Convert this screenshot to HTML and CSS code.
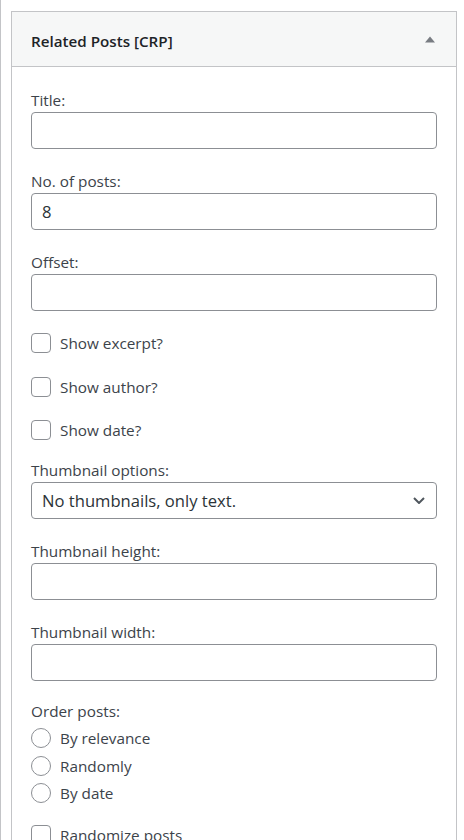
FILE: index.html
```html
<!DOCTYPE html>
<html lang="en">
<head>
<meta charset="utf-8">
<title>Related Posts [CRP]</title>
<link rel="stylesheet" href="styles.css">
</head>
<body>
<div class="page">
  <div class="widget">
    <div class="widget-top">
      <h3 class="widget-title">Related Posts [CRP]</h3>
      <span class="toggle" aria-hidden="true">
        <svg width="10" height="7" viewBox="0 0 10 7"><path d="M0 6.5 L5 0.5 L10 6.5 Z" fill="#787c82"/></svg>
      </span>
    </div>
    <div class="widget-inside">
      <div class="field">
        <label for="f-title">Title:</label>
        <input id="f-title" class="text-input" type="text">
      </div>
      <div class="field">
        <label for="f-limit">No. of posts:</label>
        <input id="f-limit" class="text-input" type="text" value="8">
      </div>
      <div class="field">
        <label for="f-offset">Offset:</label>
        <input id="f-offset" class="text-input" type="text">
      </div>
      <div class="check-group">
        <label class="check-row"><input type="checkbox" class="check"><span>Show excerpt?</span></label>
        <label class="check-row"><input type="checkbox" class="check"><span>Show author?</span></label>
        <label class="check-row"><input type="checkbox" class="check"><span>Show date?</span></label>
      </div>
      <div class="field">
        <label for="f-thumb">Thumbnail options:</label>
        <div class="select-wrap">
          <select id="f-thumb" class="select">
            <option>No thumbnails, only text.</option>
          </select>
          <svg class="chevron" width="12" height="7" viewBox="0 0 12 7"><path d="M1 1 L6 6 L11 1" fill="none" stroke="#50575e" stroke-width="2"/></svg>
        </div>
      </div>
      <div class="field">
        <label for="f-th">Thumbnail height:</label>
        <input id="f-th" class="text-input" type="text">
      </div>
      <div class="field field-tight">
        <label for="f-tw">Thumbnail width:</label>
        <input id="f-tw" class="text-input" type="text">
      </div>
      <div class="radio-group">
        <div class="group-label">Order posts:</div>
        <label class="radio-row"><input type="radio" name="order" class="radio"><span>By relevance</span></label>
        <label class="radio-row"><input type="radio" name="order" class="radio"><span>Randomly</span></label>
        <label class="radio-row"><input type="radio" name="order" class="radio"><span>By date</span></label>
      </div>
      <div class="check-group">
        <label class="check-row"><input type="checkbox" class="check"><span>Randomize posts</span></label>
      </div>
    </div>
  </div>
</div>
</body>
</html>
```
FILE: styles.css
```css
* {
  box-sizing: border-box;
}

html, body {
  margin: 0;
  background: #ffffff;
}

body {
  font-family: "Open Sans", "Noto Sans", sans-serif;
  font-size: 15.3px;
  color: #3c434a;
}

.page {
  border-left: 1px solid #c3c4c7;
  padding: 11px 7px 0 10px;
  min-height: 100vh;
}

.widget {
  width: 446px;
  border: 1px solid #c3c4c7;
  background: #ffffff;
}

.widget-top {
  height: 55px;
  background: #f6f7f7;
  border-bottom: 1px solid #c3c4c7;
  display: flex;
  justify-content: space-between;
  align-items: center;
  padding: 0 21px 0 19px;
}

.widget-title {
  margin: 0;
  padding-top: 3px;
  font-size: 15.2px;
  font-weight: 600;
  line-height: 22px;
  color: #1d2327;
}

.toggle {
  display: flex;
  align-items: center;
}

.widget-inside {
  padding: 23px 19px 40px;
}

.field {
  margin-bottom: 22px;
}

.field-tight {
  margin-bottom: 20px;
}

.field label,
.group-label {
  display: block;
  font-size: 15.3px;
  line-height: 20px;
  margin-bottom: 2px;
}

.text-input,
.select {
  display: block;
  width: 100%;
  height: 37px;
  margin: 0;
  padding: 0 10px;
  border: 1px solid #8c8f94;
  border-radius: 4px;
  background: #ffffff;
  font-family: inherit;
  font-size: 16.6px;
  color: #2c3338;
  outline: none;
}

.select-wrap {
  position: relative;
}

.select {
  appearance: none;
  -webkit-appearance: none;
  padding-right: 30px;
}

.chevron {
  position: absolute;
  right: 12px;
  top: 15px;
  pointer-events: none;
}

.check-group {
  margin-bottom: 20px;
}

.check-row,
.radio-row {
  display: flex;
  align-items: center;
  height: 20px;
  line-height: 20px;
  font-size: 15.3px;
}

.check-row {
  margin-bottom: 23.5px;
}

.check-row:last-child {
  margin-bottom: 0;
}

.check,
.radio {
  appearance: none;
  -webkit-appearance: none;
  flex: none;
  width: 20px;
  height: 20px;
  margin: 0 9px 0 0;
  border: 1px solid #8c8f94;
  background: #ffffff;
}

.check {
  border-radius: 4px;
}

.radio {
  border-radius: 50%;
}

.radio-group {
  margin-bottom: 22px;
}

.radio-group .group-label {
  margin-bottom: 7px;
}

.radio-row {
  margin-bottom: 7.5px;
}

.radio-row:last-child {
  margin-bottom: 0;
}
```
